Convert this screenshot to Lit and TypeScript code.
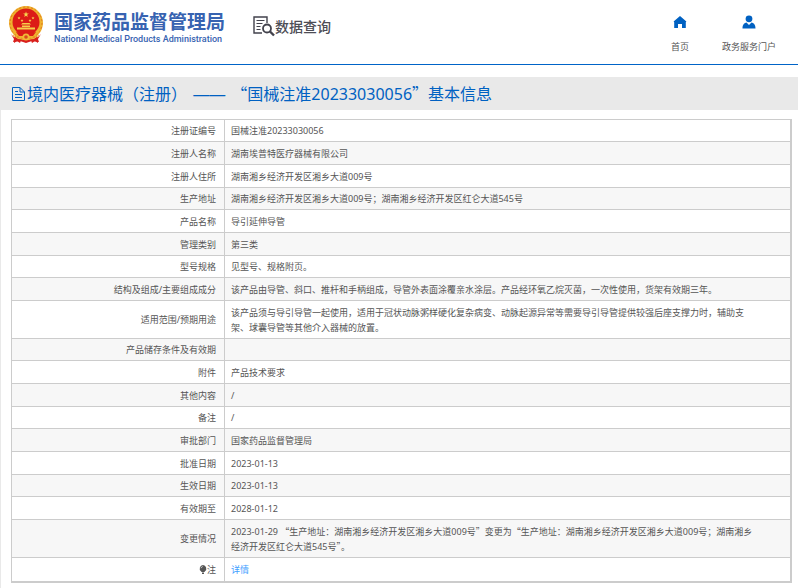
import { LitElement, html, css, svg } from "lit";
import { customElement } from "lit/decorators.js";

type Row = { label: string; lines: string[]; link?: boolean; bulb?: boolean };

const rows: Row[] = [
  { label: "注册证编号", lines: ["国械注准20233030056"] },
  { label: "注册人名称", lines: ["湖南埃普特医疗器械有限公司"] },
  { label: "注册人住所", lines: ["湖南湘乡经济开发区湘乡大道009号"] },
  { label: "生产地址", lines: ["湖南湘乡经济开发区湘乡大道009号；湖南湘乡经济开发区红仑大道545号"] },
  { label: "产品名称", lines: ["导引延伸导管"] },
  { label: "管理类别", lines: ["第三类"] },
  { label: "型号规格", lines: ["见型号、规格附页。"] },
  { label: "结构及组成/主要组成成分", lines: ["该产品由导管、斜口、推杆和手柄组成，导管外表面涂覆亲水涂层。产品经环氧乙烷灭菌，一次性使用，货架有效期三年。"] },
  {
    label: "适用范围/预期用途",
    lines: [
      "该产品须与导引导管一起使用，适用于冠状动脉粥样硬化复杂病变、动脉起源异常等需要导引导管提供较强后座支撑力时，辅助支",
      "架、球囊导管等其他介入器械的放置。",
    ],
  },
  { label: "产品储存条件及有效期", lines: [""] },
  { label: "附件", lines: ["产品技术要求"] },
  { label: "其他内容", lines: ["/"] },
  { label: "备注", lines: ["/"] },
  { label: "审批部门", lines: ["国家药品监督管理局"] },
  { label: "批准日期", lines: ["2023-01-13"] },
  { label: "生效日期", lines: ["2023-01-13"] },
  { label: "有效期至", lines: ["2028-01-12"] },
  {
    label: "变更情况",
    lines: [
      "2023-01-29 “生产地址：湖南湘乡经济开发区湘乡大道009号”变更为“生产地址：湖南湘乡经济开发区湘乡大道009号；湖南湘乡",
      "经济开发区红仑大道545号”。",
    ],
  },
  { label: "注", lines: ["详情"], link: true, bulb: true },
];

// Quotes take their full-width form from the Chinese family.
const rich = (text: string) =>
  text.split(/([“”]+)/).map((part, i) => (i % 2 ? html`<span class="wide">${part}</span>` : part));

const star = (x: number, y: number, r: number) => {
  const pts = Array.from({ length: 10 }, (_, i) => {
    const a = (Math.PI * i) / 5 - Math.PI / 2;
    const q = i % 2 ? r * 0.4 : r;
    return `${(x + q * Math.cos(a)).toFixed(2)},${(y + q * Math.sin(a)).toFixed(2)}`;
  });
  return svg`<polygon points=${pts.join(" ")} fill="#f8d64e" />`;
};

@customElement("app-root")
export class AppRoot extends LitElement {
  static styles = css`
    :host {
      display: block;
      background: #fff;
      color: #555;
      font: 9px/15px "Noto Sans", "Noto Sans CJK SC", sans-serif;
    }
    .wide {
      font-family: "Noto Sans CJK SC", sans-serif;
    }
    .dash {
      padding: 0 2px;
      font-family: "Liberation Sans", sans-serif;
    }
    svg {
      display: block;
      flex: none;
    }
    a {
      color: inherit;
      text-decoration: none;
    }
    .top {
      display: flex;
      align-items: flex-start;
      height: 64px;
      border-bottom: 1px solid #0064c8;
    }
    .brand {
      display: flex;
      align-items: flex-start;
      gap: 10px;
      padding: 5px 0 0 8px;
      color: #3763b1;
    }
    .names {
      display: flex;
      flex-direction: column;
      padding-top: 4px;
    }
    .cn {
      font: 700 19px/24px "Noto Sans CJK SC", sans-serif;
    }
    .en {
      font: 500 9px/12px Roboto, sans-serif;
    }
    .query {
      display: flex;
      align-items: center;
      padding: 15px 0 0 28px;
      color: #4d4d55;
      font: 500 14px/22px "Noto Sans CJK SC", sans-serif;
    }
    .nav {
      display: flex;
      gap: 33px;
      margin-left: auto;
      padding: 15px 22px 0 0;
    }
    .nav a {
      display: flex;
      flex-direction: column;
      align-items: center;
      gap: 10px;
    }
    .title {
      display: flex;
      align-items: center;
      gap: 1px;
      height: 33px;
      margin: 12px 0 0;
      padding-left: 11px;
      background: #e9e9e9;
      color: #0061c2;
      font-size: 16px;
      font-weight: 400;
      line-height: 32px;
      white-space: pre;
    }
    main {
      padding: 9px 6px 5px 10px;
      border-left: 1px solid #e9e9e9;
    }
    table {
      width: 100%;
      table-layout: fixed;
      border-collapse: collapse;
      border: 1px solid #ccc;
      border-width: 1px 2px 2px 1px;
    }
    .labels {
      width: 213px;
    }
    tr {
      height: 23px;
    }
    tr:nth-child(3n + 1) {
      height: 22px;
    }
    tr.double {
      height: 38px;
    }
    tr:last-child {
      height: 24px;
    }
    tr:nth-child(even) {
      background: #f7f7f7;
    }
    th,
    td {
      padding: 0 6px;
      border: 1px solid #ccc;
      font-weight: 400;
      text-align: left;
      vertical-align: middle;
    }
    th {
      padding-right: 8px;
      text-align: right;
    }
    .line {
      display: block;
    }
    .bulb {
      display: inline-block;
      vertical-align: -1px;
    }
    td a {
      color: #409eff;
    }
  `;

  emblem() {
    return svg`<svg width="36" height="40" viewBox="0 0 36 40" aria-hidden="true">
      <path d="M8 28 L5 37 L12 36 L18 38 L24 36 L31 37 L28 28Z" fill="#d9201c" />
      <circle cx="18" cy="18" r="17" fill="#efb32e" />
      <circle cx="18" cy="18" r="16" fill="none" stroke="#e2761f" stroke-width="1" stroke-dasharray="2 2" />
      <circle cx="18" cy="17" r="13.5" fill="#dc1c17" />
      ${star(18, 9.5, 3)}${star(11, 13, 1.6)}${star(14, 15.5, 1.6)}${star(22, 15.5, 1.6)}${star(25, 13, 1.6)}
      <path d="M13 19.500 L14.5 18 H21.5 L23 19.500Z M14 20.500 H22 V22 H14Z M9 22.500 H27 V24.500 H9Z" fill="#f6cf4b" />
      <path d="M8 27 Q18 29 28 27 L25 31 H11Z" fill="#dc1c17" />
      <circle cx="18" cy="32" r="3.5" fill="#f1ba37" />
      <circle cx="18" cy="32" r="1.8" fill="#d8471d" />
      <path d="M3 29 Q8 35 14 33 L12 38 L9 36 L6 38 L6 34Z M33 29 Q28 35 22 33 L24 38 L27 36 L30 38 L30 34Z" fill="#d9201c" />
      <path d="M5 30 Q10 35 15 34 M31 30 Q26 35 21 34" fill="none" stroke="#f1ba37" />
    </svg>`;
  }

  render() {
    return html`
      <header class="top">
        <div class="brand">
          ${this.emblem()}
          <div class="names">
            <span class="cn">国家药品监督管理局</span>
            <span class="en">National Medical Products Administration</span>
          </div>
        </div>
        <div class="query">
          <svg width="22" height="22" viewBox="0 0 22 22" fill="none" stroke="#42424c" aria-hidden="true">
            <path d="M14 8V2H1v16h8" stroke-width="1.4" />
            <path d="M3.5 5.5h8M3.5 8.5h6M3.5 11.5h4M3.5 14.5h4" stroke-width="1.1" />
            <circle cx="14" cy="13.5" r="4" stroke-width="1.8" />
            <path d="M17 16.5l4 4" stroke-width="2.4" />
          </svg>
          <span>数据查询</span>
        </div>
        <nav class="nav">
          <a href="#home">
            <svg width="14" height="14" viewBox="0 0 14 14" fill="#0061c2" aria-hidden="true">
              <path d="M7 1 L13.4 6.4 L12.8 7.3 V13 H9 V9 H5 V13 H1.2 V7.3 L.6 6.4Z" />
            </svg>
            <span>首页</span>
          </a>
          <a href="#portal">
            <svg width="14" height="14" viewBox="0 0 14 14" fill="#0061c2" aria-hidden="true">
              <circle cx="7" cy="3.8" r="3.4" />
              <path d="M.5 13.5 C.5 9.5 2.5 8 4.5 7.6 L7 10 L9.5 7.6 C11.5 8 13.5 9.5 13.5 13.5Z" />
            </svg>
            <span>政务服务门户</span>
          </a>
        </nav>
      </header>
      <h1 class="title"><svg width="15" height="16" viewBox="0 0 15 16" fill="none" stroke="#0061c2" aria-hidden="true">
          <path d="M1.5 1.5H9L13.5 6V14.5H1.5Z M9 1.5V6H13.5 M4 5.5H7 M4 8.5H11 M4 11.5H11" />
        </svg><span>境内医疗器械（注册） <span class="dash">——</span> ${rich("“国械注准20233030056”基本信息")}</span></h1>
      <main>
        <table>
          <colgroup><col class="labels" /><col /></colgroup>
          <tbody>
            ${rows.map(
              (r) => html`<tr class=${r.lines.length > 1 ? "double" : "single"}>
                <th scope="row">${r.bulb
                  ? html`<svg class="bulb" width="8" height="9" viewBox="0 0 8 9" fill="#555" aria-hidden="true">
                      <path d="M4 0a3.5 3.5 0 0 1 2 6.2L5.5 7h-3L2 6.2A3.5 3.5 0 0 1 4 0Z M3 7.5h2V9H3Z" />
                      <path d="M2 3.2Q2.4 1.7 3.8 1.5" stroke="#fff" stroke-width=".6" fill="none" />
                    </svg>`
                  : ""}${r.label}</th>
                <td>${r.link
                  ? html`<a href="#detail">${r.lines[0]}</a>`
                  : r.lines.map((l) => html`<span class="line">${rich(l)}</span>`)}</td>
              </tr>`
            )}
          </tbody>
        </table>
      </main>
    `;
  }
}
